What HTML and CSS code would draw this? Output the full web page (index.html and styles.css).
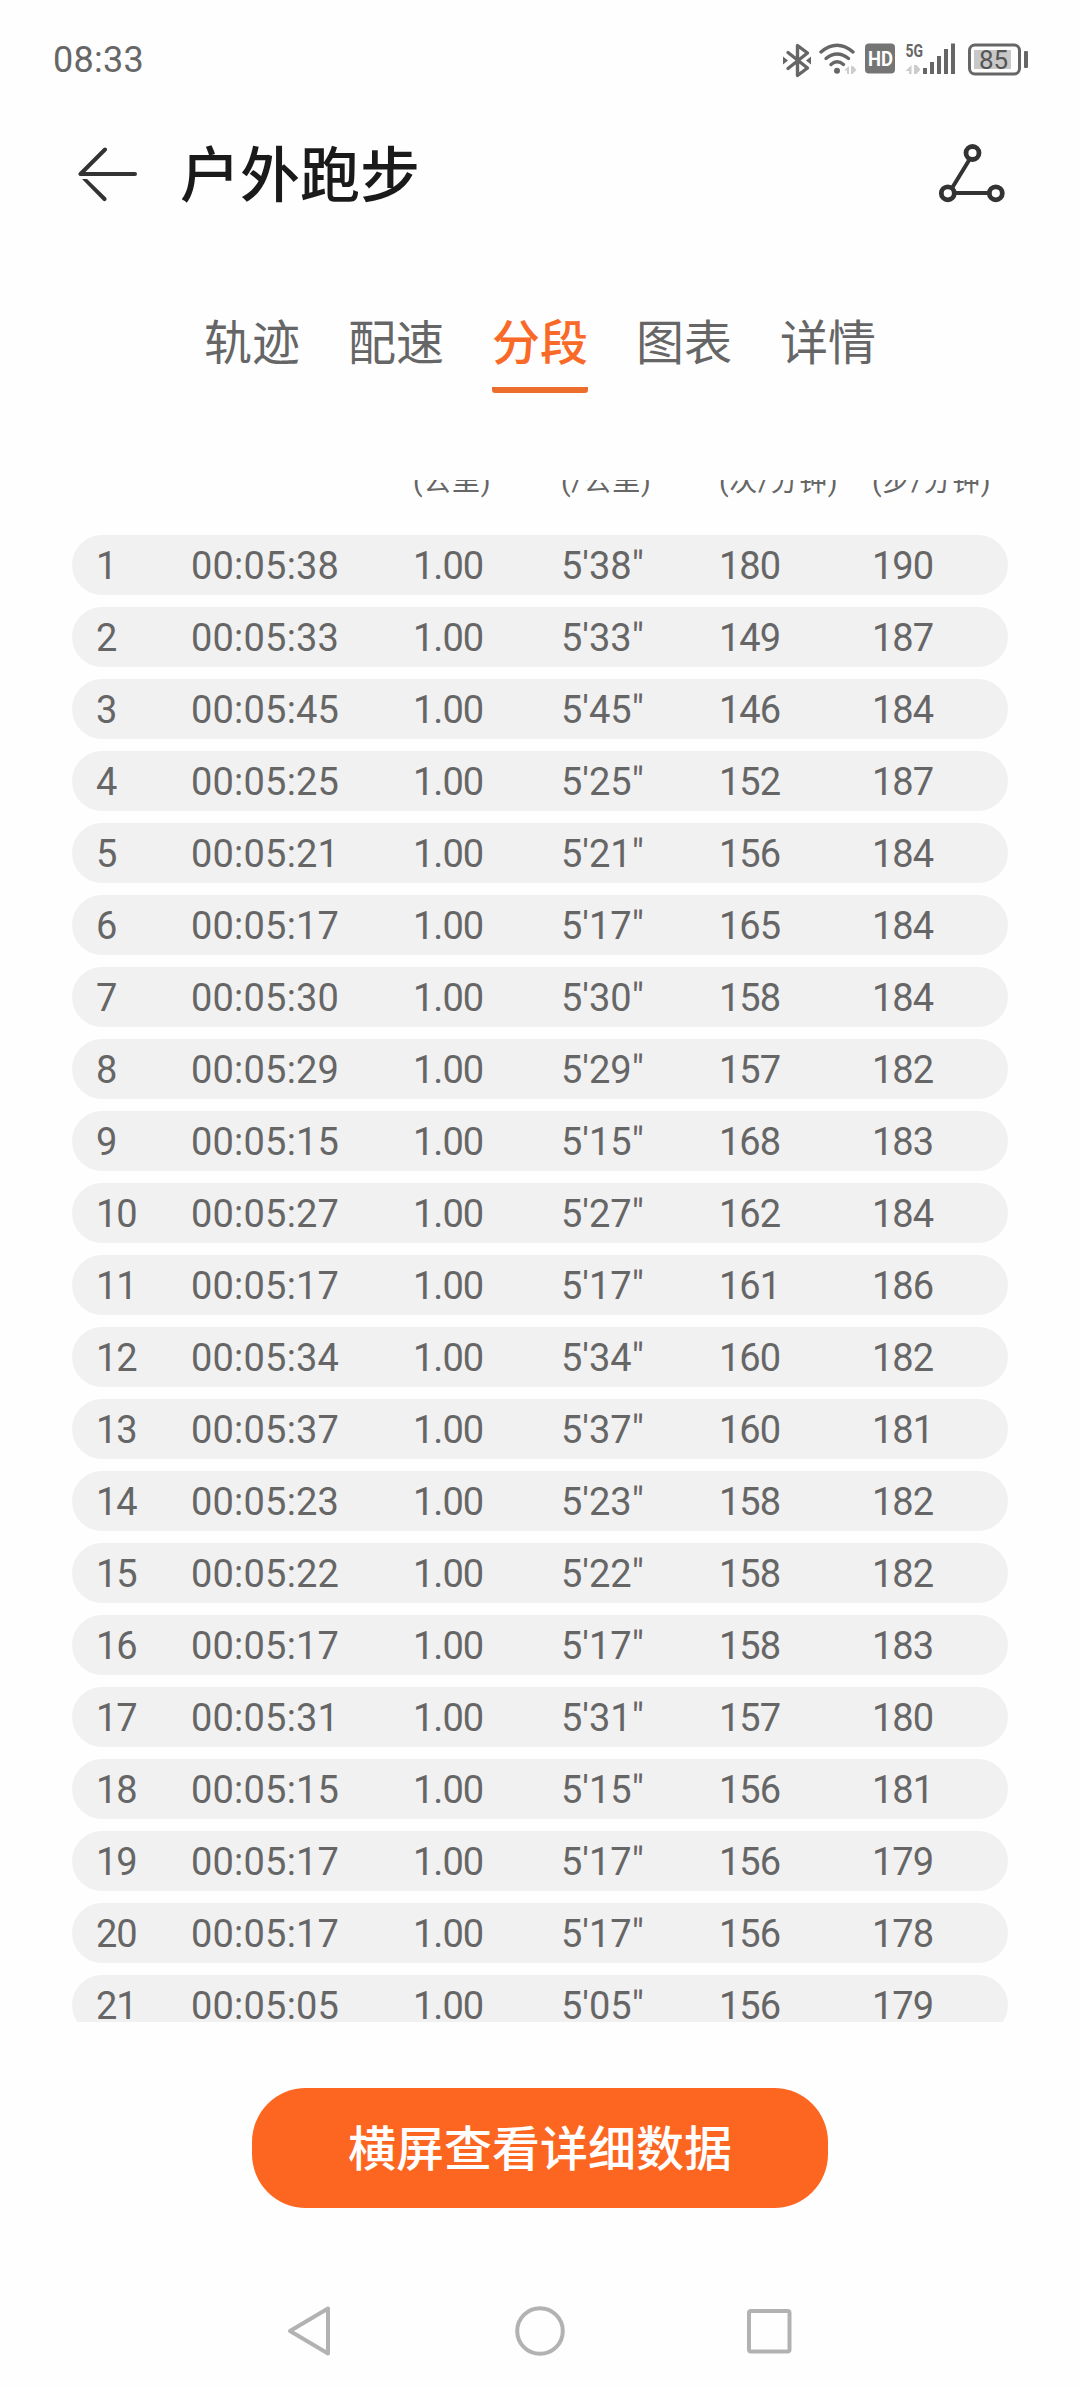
FILE: index.html
```html
<!DOCTYPE html>
<html lang="zh-CN">
<head>
    <meta charset="UTF-8">
    <meta name="viewport" content="width=device-width, initial-scale=1.0">
    <title>户外跑步</title>
    <link rel="stylesheet" href="styles.css">
</head>
<body>
    <div class="status">
        <span class="time">08:33</span>
        <svg class="status-icons" width="248" height="36" viewBox="782 42 248 36">
            <!-- bluetooth -->
            <path d="M788 52.5L807.5 68L797.5 75.5V45.500L807.500 53L788 68.5" fill="none" stroke="#666" stroke-width="3.4" stroke-linejoin="round" stroke-linecap="round"/>
            <path d="M783 56.5v8l5-4zM811 56.5v8l-5-4z" fill="#666"/>
            <!-- wifi -->
            <g fill="none" stroke="#666" stroke-width="3.4" stroke-linecap="round">
                <path d="M821 52Q837 38.5 853 52"/>
                <path d="M826 58.5Q837 49.5 848.5 58.5"/>
                <path d="M831 64.5Q837 59 843.5 64.5"/>
            </g>
            <circle cx="837" cy="70.8" r="3" fill="#666"/>
            <path d="M844 70.5l5-4.5v8h-2v-3.5zM851 66h2l3.5 4-4 4h-1.5z" fill="#ccc"/>
            <!-- hd -->
            <rect x="865" y="43.5" width="30" height="30" rx="4" fill="#757575"/>
            <text class="hd" x="868" y="65.5" textLength="25" lengthAdjust="spacingAndGlyphs">HD</text>
            <!-- 5g -->
            <text class="net" x="905.5" y="57" textLength="17.5" lengthAdjust="spacingAndGlyphs">5G</text>
            <path d="M905.5 71l6-6v9h-2.5v-3zM914 65h2.5l4 4.5-4 4.5h-2.5z" fill="#ccc"/>
            <path d="M923 68h4v6h-4zM930 62h4v12h-4zM937 56h4v18h-4zM944 49h4v25h-4zM951 43.5h4v30.5h-4z" fill="#666"/>
            <!-- battery -->
            <rect x="974" y="50" width="37" height="19" fill="#c8c8c8"/>
            <rect x="969.5" y="45" width="50" height="29" rx="5.5" fill="none" stroke="#666" stroke-width="3"/>
            <rect x="1024" y="51" width="4" height="17" rx="1" fill="#666"/>
            <text class="level" x="979" y="69">85</text>
        </svg>
    </div>

    <div class="header">
        <svg class="back" width="60" height="56" viewBox="0 0 60 56">
            <path d="M2.5 28H57M2.5 28L27 3.5" fill="none" stroke="#333" stroke-width="4" stroke-linecap="round" stroke-linejoin="round"/>
            <path d="M4 33H9L28 51.5A2 2 0 0 1 25 54.5Z" fill="#333"/>
        </svg>
        <h1>户外跑步</h1>
        <svg class="route" width="68" height="62" viewBox="0 0 68 62">
            <path d="M11 50L35.5 10M9.5 50H57.5" stroke="#333" stroke-width="4"/>
            <g fill="#fff" stroke="#333" stroke-width="4.8">
                <circle cx="34.5" cy="10" r="6.5"/>
                <circle cx="9.8" cy="50.3" r="6.5"/>
                <circle cx="57.8" cy="50.3" r="6.5"/>
            </g>
        </svg>
    </div>

    <div class="tabs">
        <div class="tab">轨迹</div>
        <div class="tab">配速</div>
        <div class="tab active">分段</div>
        <div class="tab">图表</div>
        <div class="tab">详情</div>
    </div>

    <div class="list" id="list">
        <div class="row head">
            <span></span>
            <span></span>
            <span>(公里)</span>
            <span>(/公里)</span>
            <span>(次/分钟)</span>
            <span>(步/分钟)</span>
        </div>
    </div>

    <div class="btn">横屏查看详细数据</div>

    <div class="nav">
        <svg width="56" height="54" viewBox="0 0 56 54">
            <path d="M8 27L46 4.5V49.5Z" fill="none" stroke="#b2b2b2" stroke-width="4" stroke-linejoin="round"/>
        </svg>
        <svg width="54" height="54" viewBox="0 0 54 54">
            <circle cx="27" cy="27" r="22.8" fill="none" stroke="#b2b2b2" stroke-width="4"/>
        </svg>
        <svg width="54" height="54" viewBox="0 0 54 54">
            <rect x="7" y="7" width="40.5" height="40.5" rx="2" fill="none" stroke="#b2b2b2" stroke-width="4"/>
        </svg>
    </div>

    <script>
    var list=document.getElementById('list');
    // pace, heart rate, cadence for each kilometre
    var data=[
        ['05:38',180,190],['05:33',149,187],['05:45',146,184],['05:25',152,187],
        ['05:21',156,184],['05:17',165,184],['05:30',158,184],['05:29',157,182],
        ['05:15',168,183],['05:27',162,184],['05:17',161,186],['05:34',160,182],
        ['05:37',160,181],['05:23',158,182],['05:22',158,182],['05:17',158,183],
        ['05:31',157,180],['05:15',156,181],['05:17',156,179],['05:17',156,178],
        ['05:05',156,179]
    ];
    for(var i=0;i<data.length;i++){
        var d=data[i];
        var pace=d[0].slice(1).replace(':',"'")+'"';
        var cells=[i+1,'00:'+d[0],'1.00',pace,d[1],d[2]];
        var row=document.createElement('div');
        row.className='row';
        row.innerHTML='<span>'+cells.join('</span><span>')+'</span>';
        list.appendChild(row);
    }
    </script>
</body>
</html>
```
FILE: styles.css
```css
*{
    box-sizing: border-box;
}
body{
    margin: 0;
    width: 1080px;
    height: 2388px;
    background-color: #fefefe;
    color: #666;
    font-family: Roboto, "Noto Sans CJK SC", sans-serif;
    display: flex;
    flex-direction: column;
    overflow: hidden;
}
svg{
    display: block;
}

.status{
    height: 120px;
    padding: 0 50px 0 53px;
    display: flex;
    justify-content: space-between;
    align-items: center;
}
.time{
    font-size: 36px;
    line-height: 42px;
    letter-spacing: 0.3px;
}
.hd{
    font-size: 20px;
    font-weight: bold;
    fill: #fff;
}
.net{
    font-size: 18px;
    font-weight: bold;
    fill: #666;
}
.level{
    font-size: 26px;
    fill: #555;
}

.header{
    height: 108px;
    padding: 0 74px 0 78px;
    display: flex;
    align-items: center;
}
.header h1{
    flex: 1;
    margin: 0 0 0 42px;
    padding-top: 6px;
    font-size: 60px;
    line-height: 80px;
    font-weight: 500;
    color: #1a1a1a;
}

.tabs{
    height: 252px;
    padding-top: 78px;
    display: flex;
    justify-content: center;
    gap: 48px;
}
.tab{
    height: 87px;
    font-size: 48px;
    line-height: 76px;
}
.active{
    color: #f96a29;
    font-weight: 500;
    border-bottom: 6px solid #ed6d2d;
    border-radius: 3px;
}

.list{
    height: 1542px;
    margin: 0 72px;
    overflow: hidden;
}
.row{
    height: 60px;
    margin-bottom: 12px;
    padding: 1px 0 0 24px;
    display: grid;
    grid-template-columns: 95px 222px 148px 158px 153px 1fr;
    border-radius: 30px;
    background-color: #f1f1f1;
    font-size: 38px;
    line-height: 60px;
    letter-spacing: -1px;
    white-space: nowrap;
}
.row span:nth-child(2){
    letter-spacing: 0.2px;
}
.row span:nth-child(4){
    letter-spacing: 0;
}
.row.head{
    height: 55px;
    margin: 0;
    padding-top: 0;
    background: none;
    font-size: 28px;
    line-height: 4px;
}
.row.head span{
    letter-spacing: 0.7px;
}

.btn{
    width: 576px;
    height: 120px;
    margin: 66px auto 0;
    border-radius: 54px;
    background-color: #fd6621;
    color: #fff;
    font-size: 48px;
    font-weight: 500;
    line-height: 123px;
    text-align: center;
}

.nav{
    margin-top: 96px;
    padding: 0 284px 0 282px;
    display: flex;
    justify-content: space-between;
}
```
